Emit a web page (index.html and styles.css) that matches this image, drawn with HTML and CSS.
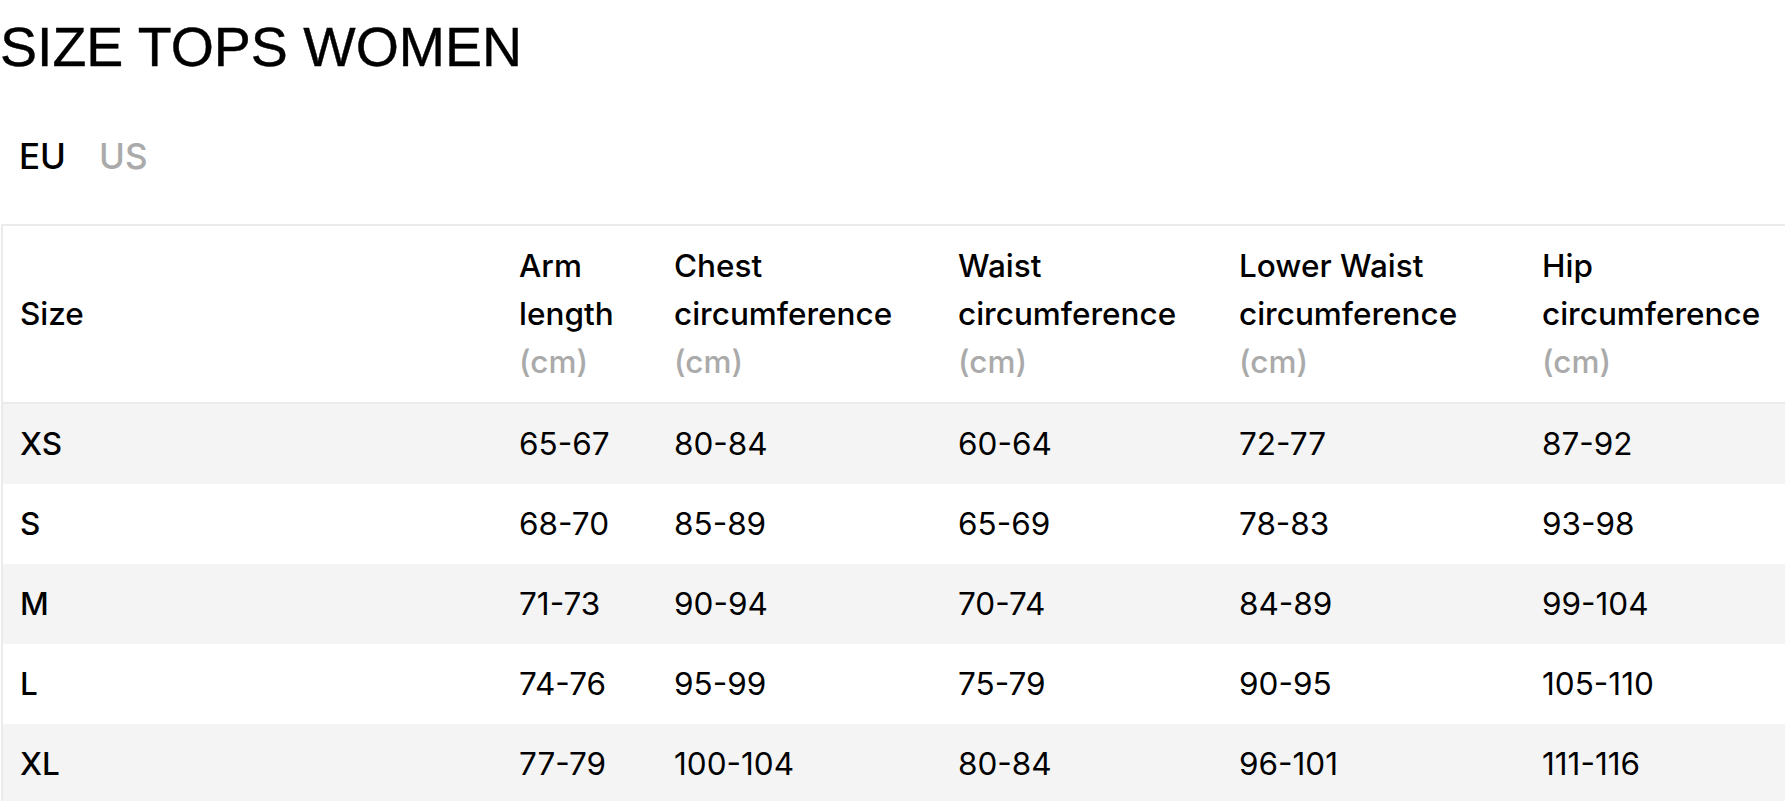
FILE: index.html
```html
<!DOCTYPE html>
<html lang="en">
<head>
<meta charset="utf-8">
<title>Size Tops Women</title>
<link rel="stylesheet" href="styles.css">
</head>
<body>
<h1 class="title">SIZE TOPS WOMEN</h1>
<div class="tabs">
  <span class="tab tab-active">EU</span>
  <span class="tab">US</span>
</div>
<div class="table-wrap">
  <table class="size-table">
    <colgroup>
      <col class="c-size">
      <col class="c-arm">
      <col class="c-chest">
      <col class="c-waist">
      <col class="c-lower">
      <col class="c-hip">
    </colgroup>
    <thead>
      <tr>
        <th>Size</th>
        <th>Arm<br>length<br><span class="unit">(cm)</span></th>
        <th>Chest<br>circumference<br><span class="unit">(cm)</span></th>
        <th>Waist<br>circumference<br><span class="unit">(cm)</span></th>
        <th>Lower Waist<br>circumference<br><span class="unit">(cm)</span></th>
        <th>Hip<br>circumference<br><span class="unit">(cm)</span></th>
      </tr>
    </thead>
    <tbody>
      <tr><td class="size">XS</td><td>65-67</td><td>80-84</td><td>60-64</td><td>72-77</td><td>87-92</td></tr>
      <tr><td class="size">S</td><td>68-70</td><td>85-89</td><td>65-69</td><td>78-83</td><td>93-98</td></tr>
      <tr><td class="size">M</td><td>71-73</td><td>90-94</td><td>70-74</td><td>84-89</td><td>99-104</td></tr>
      <tr><td class="size">L</td><td>74-76</td><td>95-99</td><td>75-79</td><td>90-95</td><td>105-110</td></tr>
      <tr><td class="size">XL</td><td>77-79</td><td>100-104</td><td>80-84</td><td>96-101</td><td>111-116</td></tr>
    </tbody>
  </table>
</div>
</body>
</html>
```

FILE: styles.css
```css
html, body {
  margin: 0;
  padding: 0;
  background: #ffffff;
}

body {
  font-family: Inter, "Liberation Sans", Arial, sans-serif;
  color: #000;
  overflow: hidden;
}

.title {
  margin: 15px 0 0 0;
  font-family: "Liberation Sans", Arial, Helvetica, sans-serif;
  font-size: 55.5px;
  line-height: 64px;
  font-weight: 400;
  color: #000;
  -webkit-text-stroke: 0.4px #000;
}

.tabs {
  display: flex;
  gap: 33px;
  margin-top: 53px;
  padding-left: 19px;
}

.tab {
  font-size: 35px;
  line-height: 48px;
  font-weight: 500;
  color: #aaaaaa;
}

.tab-active {
  color: #000;
}

.table-wrap {
  margin-top: 44px;
  margin-left: 1px;
  overflow: hidden;
}

.size-table {
  border-collapse: separate;
  border-spacing: 0;
  table-layout: fixed;
  width: 1826px;
  border-top: 2px solid #ebebeb;
  border-left: 2px solid #ebebeb;
  font-size: 31.5px;
  line-height: 48px;
}

.c-size { width: 499px; }
.c-arm { width: 155px; }
.c-chest { width: 284px; }
.c-waist { width: 281px; }
.c-lower { width: 303px; }
.c-hip { width: 302px; }

.size-table th {
  text-align: left;
  font-weight: 500;
  vertical-align: middle;
  padding: 16px 17px;
  border-bottom: 2px solid #ebebeb;
  white-space: nowrap;
}

.unit {
  color: #aaaaaa;
}

.size-table td {
  padding: 16px 17px;
  font-weight: 400;
  vertical-align: middle;
  white-space: nowrap;
}

.size-table td.size {
  font-weight: 500;
}

.size-table tbody tr:nth-child(odd) {
  background: #f4f4f4;
}
```
